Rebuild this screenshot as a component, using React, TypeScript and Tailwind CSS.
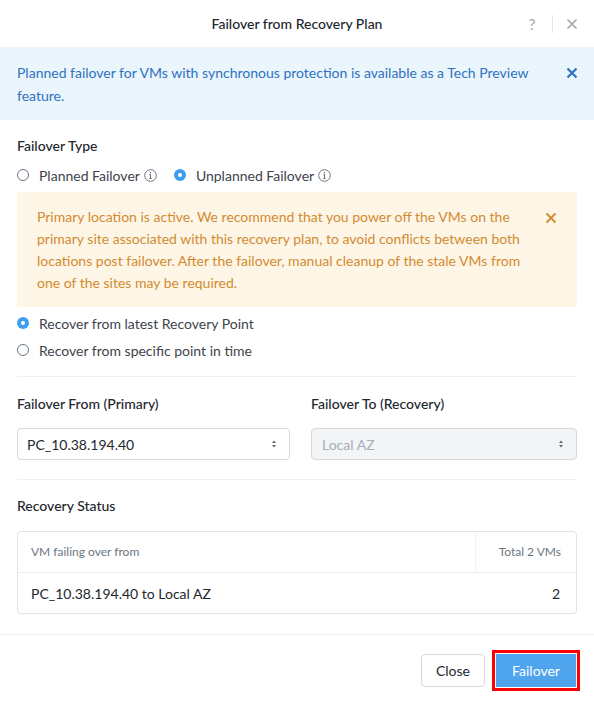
import React from 'react';

function Radio({ checked }: { checked?: boolean }) {
  return checked ? (
    <span className="w-3 h-3 rounded-full bg-[#3f9ef0] flex items-center justify-center shrink-0">
      <span className="w-1 h-1 rounded-full bg-white" />
    </span>
  ) : (
    <span className="w-3 h-3 rounded-full border border-[#6b7683] bg-white shrink-0" />
  );
}

function InfoIcon() {
  return (
    <svg width="13" height="13" viewBox="0 0 13 13" className="ml-1 text-[#5c6670]">
      <circle cx="6.5" cy="6.5" r="5.8" fill="none" stroke="currentColor" strokeWidth="0.9" />
      <rect x="6" y="5.4" width="1" height="4.2" fill="currentColor" />
      <rect x="5.2" y="5.4" width="1.3" height="0.8" fill="currentColor" />
      <rect x="5.2" y="9" width="2.6" height="0.8" fill="currentColor" />
      <circle cx="6.5" cy="3.8" r="0.7" fill="currentColor" />
    </svg>
  );
}

function Cross({ className, size = 12, w = 1.8 }: { className?: string; size?: number; w?: number }) {
  return (
    <svg width={size} height={size} viewBox="0 0 12 12" className={className}>
      <path d="M1.5 1.5 L10.5 10.5 M10.5 1.5 L1.5 10.5" stroke="currentColor" strokeWidth={w} fill="none" />
    </svg>
  );
}

function Updown() {
  return (
    <svg width="6" height="10" viewBox="0 0 6 10" className="text-[#5c6670]">
      <path d="M3 1.5 L5 4 H1 Z M3 8.5 L5 6 H1 Z" fill="currentColor" />
    </svg>
  );
}

export default function App() {
  return (
    <div className="w-[594px] h-[703px] bg-white font-['Lato',sans-serif] text-[#22272e] flex flex-col">
      {/* header */}
      <div className="h-[47px] shrink-0 flex items-center relative">
        <div className="flex-1 text-center text-[14px] font-medium text-[#22272e]">Failover from Recovery Plan</div>
        <div className="absolute right-[16px] top-0 h-[47px] flex items-center">
          <span className="text-[16px] text-[#a0a9b3] w-[14px] text-center">?</span>
          <span className="w-px h-[18px] bg-[#e3e7eb] mx-[13px]" />
          <Cross className="text-[#a0a9b3]" size={12} w={1.7} />
        </div>
      </div>

      {/* info banner */}
      <div className="bg-[#eaf5fc] px-[17px] pt-[14px] pb-[12px] flex items-start shrink-0 h-[73px]">
        <p className="flex-1 text-[14px] leading-[23px] text-[#2f72c3] pr-6">
          Planned failover for VMs with synchronous protection is available as a Tech Preview feature.
        </p>
        <Cross className="text-[#2f72c3] mt-[6px] mr-[-1px]" size={12} w={2.2} />
      </div>

      <div className="px-[17px] flex flex-col">
        <div className="text-[14px] font-medium mt-[17px] leading-[18px]">Failover Type</div>
        <div className="flex items-center mt-[11px] h-[18px] text-[14px] text-[#3d444c]">
          <Radio />
          <span className="ml-[10px]">Planned Failover</span>
          <InfoIcon />
          <span className="w-[17px]" />
          <Radio checked />
          <span className="ml-[10px]">Unplanned Failover</span>
          <InfoIcon />
        </div>

        <div className="mt-[8px] bg-[#fdf6e7] pl-[20px] pr-[20px] pt-[14px] pb-[13px] flex items-start">
          <p className="flex-1 text-[14px] leading-[22px] text-[#d48a2f] pr-5">
            Primary location is active. We recommend that you power off the VMs on the primary site associated with this recovery plan, to avoid conflicts between both locations post failover. After the failover, manual cleanup of the stale VMs from one of the sites may be required.
          </p>
          <Cross className="text-[#d48a2f] mt-[6px]" size={12} w={1.8} />
        </div>

        <div className="flex items-center mt-[7px] h-[18px] text-[14px] text-[#3d444c]">
          <Radio checked />
          <span className="ml-[10px]">Recover from latest Recovery Point</span>
        </div>
        <div className="flex items-center mt-[9px] h-[18px] text-[14px] text-[#3d444c]">
          <Radio />
          <span className="ml-[10px]">Recover from specific point in time</span>
        </div>

        <div className="h-px bg-[#edf0f2] mt-[17px]" />

        <div className="grid grid-cols-[273px_266px] gap-x-[21px] mt-[18px]">
          <div className="text-[14px] font-medium leading-[18px]">Failover From (Primary)</div>
          <div className="text-[14px] font-medium leading-[18px]">Failover To (Recovery)</div>
          <div className="mt-[15px] h-[32px] border border-[#d4dae0] rounded-[4px] bg-white flex items-center justify-between pl-[9px] pr-[12px] text-[14px] text-[#22272e]">
            <span>PC_10.38.194.40</span>
            <Updown />
          </div>
          <div className="mt-[15px] h-[32px] border border-[#d4dae0] rounded-[4px] bg-[#f2f4f6] flex items-center justify-between pl-[10px] pr-[12px] text-[14px] text-[#a5aeb7]">
            <span>Local AZ</span>
            <Updown />
          </div>
        </div>

        <div className="h-px bg-[#edf0f2] mt-[19px]" />

        <div className="text-[14px] font-medium mt-[17px] leading-[18px]">Recovery Status</div>

        <div className="mt-[16px] border border-[#dfe3e7] rounded-[4px] w-[560px]">
          <div className="flex h-[41px] border-b border-[#edf0f2] text-[12px] text-[#6b7683]">
            <div className="flex-1 flex items-center pl-[13px]">VM failing over from</div>
            <div className="w-[101px] border-l border-[#edf0f2] flex items-center justify-end pr-[15px]">Total 2 VMs</div>
          </div>
          <div className="flex h-[40px] items-center justify-between pl-[13px] pr-[16px] text-[14px] text-[#22272e]">
            <span>PC_10.38.194.40 to Local AZ</span>
            <span>2</span>
          </div>
        </div>
      </div>

      <div className="h-px bg-[#edf0f2] mt-[20px]" />

      <div className="flex justify-end items-center pr-[14px] pt-[15px] gap-[7px]">
        <button className="h-[33px] px-[14px] border border-[#d4dae0] rounded-[4px] bg-white text-[14px] text-[#22272e]">
          Close
        </button>
        <div className="border-[3px] border-[#ff0000] p-px">
          <button className="h-[33px] w-[80px] bg-[#4ea5ee] text-white text-[14px]">Failover</button>
        </div>
      </div>
    </div>
  );
}
